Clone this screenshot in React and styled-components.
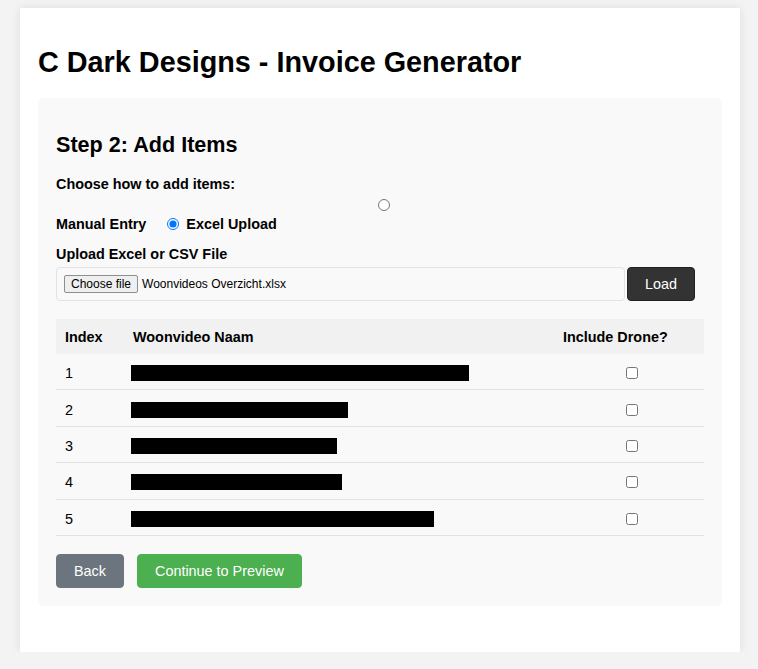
import React from 'react';
import styled, { createGlobalStyle } from 'styled-components';

const GlobalStyle = createGlobalStyle`
  html, body {
    margin: 0;
    padding: 0;
    background-color: #f3f3f3;
    font-family: "Liberation Sans", Arial, sans-serif;
    font-size: 14.4px;
    color: #000;
  }
`;

const Card = styled.div`
  box-sizing: border-box;
  width: 720px;
  margin: 8px 0 0 20px;
  padding: 18px 18px 18px;
  background-color: #fff;
  box-shadow: 0 0 9px rgba(0, 0, 0, 0.09);
`;

const Title = styled.h1`
  margin: 20px 0 20px;
  font-size: 28.8px;
  line-height: 32px;
  font-weight: bold;
`;

const Panel = styled.div`
  box-sizing: border-box;
  padding: 18px;
  margin-bottom: 28px;
  background-color: #f9f9f9;
  border-radius: 5px;
`;

const StepTitle = styled.h2`
  margin: 17px 0 0;
  font-size: 21.6px;
  line-height: 24px;
  font-weight: bold;
`;

const Label = styled.div`
  margin-top: ${(p) => p.$top}px;
  height: 18px;
  line-height: 18px;
  font-weight: bold;
`;

const LoneRadioRow = styled.div`
  display: flex;
  justify-content: center;
  align-items: center;
  height: 16px;
  margin-top: 4px;
  padding-left: 8px;
`;

const Radio = styled.input.attrs({ type: 'radio' })`
  width: 12px;
  height: 12px;
  margin: 0;
`;

const OptionsRow = styled.div`
  display: flex;
  align-items: center;
  height: 18px;
  margin-top: 2px;
  font-weight: bold;
`;

const Option = styled.label`
  display: flex;
  align-items: center;
  gap: 7px;
  margin-left: ${(p) => p.$left || 0}px;
`;

const FileRow = styled.div`
  display: flex;
  gap: 2px;
  height: 34px;
  margin-top: 4px;
  margin-right: 9px;
`;

const FileBox = styled.div`
  box-sizing: border-box;
  flex: 1;
  display: flex;
  align-items: center;
  gap: 4px;
  padding-left: 7px;
  border: 1px solid #e3e3e3;
  border-radius: 4px;
  background-color: #f9f9f9;
  font-size: 12px;
`;

const ChooseButton = styled.span`
  box-sizing: border-box;
  height: 18px;
  line-height: 16px;
  padding: 0 6px;
  border: 1px solid #8f8f8f;
  border-radius: 2px;
  background-color: #efefef;
  color: #000;
`;

const Button = styled.button`
  box-sizing: border-box;
  height: 34px;
  padding: 0 17px;
  border: 1px solid ${(p) => p.$border || p.$bg};
  border-radius: 4px;
  background-color: ${(p) => p.$bg};
  color: #fff;
  font-family: "Liberation Sans", Arial, sans-serif;
  font-size: 14.4px;
  cursor: pointer;
`;

const Table = styled.div`
  margin-top: 18px;
  display: grid;
  grid-template-columns: 68px 430px 1fr;
`;

const HeadCell = styled.div`
  display: flex;
  align-items: center;
  height: 35px;
  padding-left: 9px;
  background-color: #f1f1f1;
  font-weight: bold;
`;

const Cell = styled.div`
  box-sizing: border-box;
  display: flex;
  align-items: center;
  justify-content: ${(p) => (p.$center ? 'center' : 'flex-start')};
  height: 36.4px;
  padding-left: 9px;
  padding-right: ${(p) => (p.$center ? '3px' : '0')};
  padding-top: 3px;
  border-bottom: 1px solid #e2e2e2;
`;

const Redacted = styled.span`
  display: inline-block;
  height: 16px;
  margin-left: -2px;
  background-color: #000;
`;

const Checkbox = styled.input.attrs({ type: 'checkbox' })`
  width: 12px;
  height: 12px;
  margin: 0;
`;

const Actions = styled.div`
  display: flex;
  gap: 13px;
  margin-top: 18px;
`;

const rows = [
  { index: 1, bar: 338 },
  { index: 2, bar: 217 },
  { index: 3, bar: 206 },
  { index: 4, bar: 211 },
  { index: 5, bar: 303 },
];

const App = () => (
  <>
    <GlobalStyle />
    <Card>
      <Title>C Dark Designs - Invoice Generator</Title>
      <Panel>
        <StepTitle>Step 2: Add Items</StepTitle>
        <Label $top={18}>Choose how to add items:</Label>
        <LoneRadioRow>
          <Radio name="mode" />
        </LoneRadioRow>
        <OptionsRow>
          <span>Manual Entry</span>
          <Option $left={21}>
            <Radio name="mode" defaultChecked />
            Excel Upload
          </Option>
        </OptionsRow>
        <Label $top={12}>Upload Excel or CSV File</Label>
        <FileRow>
          <FileBox>
            <ChooseButton>Choose file</ChooseButton>
            <span>Woonvideos Overzicht.xlsx</span>
          </FileBox>
          <Button $bg="#333" $border="#222">Load</Button>
        </FileRow>
        <Table>
          <HeadCell>Index</HeadCell>
          <HeadCell>Woonvideo Naam</HeadCell>
          <HeadCell>Include Drone?</HeadCell>
          {rows.map((row) => (
            <React.Fragment key={row.index}>
              <Cell>{row.index}</Cell>
              <Cell>
                <Redacted style={{ width: row.bar }} />
              </Cell>
              <Cell $center>
                <Checkbox />
              </Cell>
            </React.Fragment>
          ))}
        </Table>
        <Actions>
          <Button $bg="#6c757d">Back</Button>
          <Button $bg="#4caf50">Continue to Preview</Button>
        </Actions>
      </Panel>
    </Card>
  </>
);

export default App;
